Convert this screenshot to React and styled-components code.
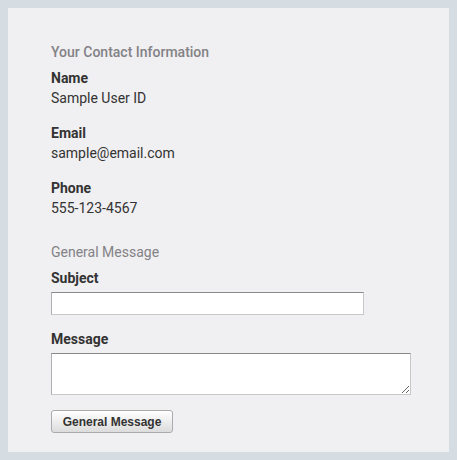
import React from "react";
import styled, { createGlobalStyle } from "styled-components";

const Global = createGlobalStyle`
  html, body { margin: 0; padding: 0; background: #d5dde3; }
  body { font-family: Roboto, "Liberation Sans", Arial, sans-serif; }
`;

const Page = styled.div`
  padding: 8px 8px 8px 8px;
  box-sizing: border-box;
  width: 457px;
  height: 460px;
`;

const Panel = styled.form`
  background: #f0eff1;
  width: 441px;
  height: 444px;
  box-sizing: border-box;
  padding: 34px 38px 19px 43px;
  display: flex;
  flex-direction: column;
  align-items: flex-start;
`;

const Heading = styled.h2`
  margin: ${(p) => p.$top || 0}px 0 6px 0;
  font-size: 14px;
  line-height: 20px;
  font-weight: ${(p) => (p.$strong ? 500 : 400)};
  color: #838286;
`;

const Field = styled.div`
  display: flex;
  flex-direction: column;
  margin-bottom: 15px;
`;

const Label = styled.label`
  font-size: 14px;
  line-height: 20px;
  font-weight: 700;
  color: #333333;
`;

const Value = styled.div`
  font-size: 14px;
  line-height: 20px;
  color: #333333;
`;

const InputField = styled.div`
  display: flex;
  flex-direction: column;
  gap: 4px;
  margin-bottom: ${(p) => p.$mb}px;
`;

const TextInput = styled.input`
  width: 313px;
  height: 23px;
  box-sizing: border-box;
  border: 1px solid #c8c8c8;
  border-top-color: #8a8a8a;
  border-left-color: #b0b0b0;
  background: #fff;
  margin: 0;
  padding: 2px 4px;
  outline: none;
`;

const TextArea = styled.textarea`
  width: 360px;
  height: 42px;
  box-sizing: border-box;
  border: 1px solid #c8c8c8;
  border-top-color: #8a8a8a;
  border-left-color: #b0b0b0;
  background: #fff;
  margin: 0;
  padding: 2px 4px;
  outline: none;
  display: block;
`;

const Button = styled.button`
  height: 23px;
  width: 122px;
  box-sizing: border-box;
  border: 1px solid #ababab;
  border-radius: 3px;
  background: linear-gradient(#ffffff, #ececec 55%, #dcdcdc);
  font-family: "Liberation Sans", Arial, sans-serif;
  font-size: 12px;
  font-weight: 700;
  color: #333;
  padding: 0;
  cursor: pointer;
`;

export default function App() {
  return (
    <>
      <Global />
      <Page>
        <Panel onSubmit={(e) => e.preventDefault()}>
          <Heading $strong>Your Contact Information</Heading>
          <Field>
            <Label>Name</Label>
            <Value>Sample User ID</Value>
          </Field>
          <Field>
            <Label>Email</Label>
            <Value>sample@email.com</Value>
          </Field>
          <Field>
            <Label>Phone</Label>
            <Value>555-123-4567</Value>
          </Field>
          <Heading $top={9}>General Message</Heading>
          <InputField $mb={14}>
            <Label>Subject</Label>
            <TextInput type="text" />
          </InputField>
          <InputField $mb={15}>
            <Label>Message</Label>
            <TextArea />
          </InputField>
          <Button type="submit">General Message</Button>
        </Panel>
      </Page>
    </>
  );
}
